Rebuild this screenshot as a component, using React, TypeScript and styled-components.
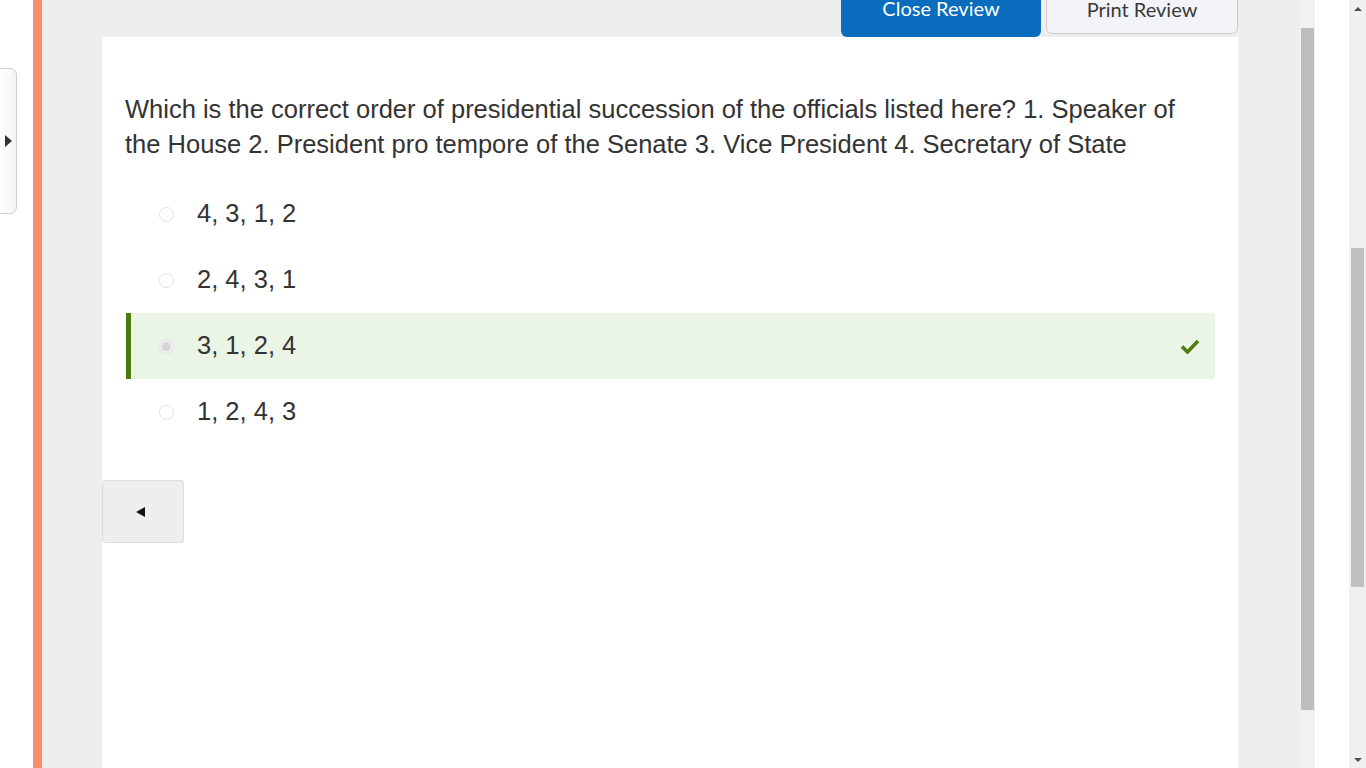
import styled, {createGlobalStyle} from "styled-components";

const GlobalStyle = createGlobalStyle`
    html, body {
        margin: 0;
        padding: 0;
        background: #ffffff;
        overflow: hidden;
    }
`

const options = [
    {label: '4, 3, 1, 2', correct: false},
    {label: '2, 4, 3, 1', correct: false},
    {label: '3, 1, 2, 4', correct: true},
    {label: '1, 2, 4, 3', correct: false},
]

const question = 'Which is the correct order of presidential succession of the officials listed here? 1. Speaker of the House 2. President pro tempore of the Senate 3. Vice President 4. Secretary of State'

const $Page = styled.div`
    display: flex;
    height: 100vh;
    width: 100vw;
    overflow: hidden;
`

const $LeftRail = styled.div`
    width: 33px;
    flex-shrink: 0;
    padding-top: 68px;
    box-sizing: border-box;
`

const $DrawerTab = styled.div`
    width: 18px;
    height: 146px;
    margin-left: -1px;
    box-sizing: border-box;
    border: 1px solid #cfcfcf;
    border-radius: 0 7px 7px 0;
    background: linear-gradient(to right, #ffffff, #f3f3f3);
    display: flex;
    align-items: center;
    padding-left: 5px;
`

const $TriRight = styled.div`
    width: 0;
    height: 0;
    border-top: 6px solid transparent;
    border-bottom: 6px solid transparent;
    border-left: 7px solid #333;
`

const $Accent = styled.div`
    width: 9px;
    flex-shrink: 0;
    background: #f68e6a;
    border-right: 2px solid #f8eee0;
`

const $Main = styled.div`
    flex: 1;
    background: #eeeeee;
    display: flex;
    flex-direction: column;
    padding: 0 62px 0 58px;
    min-width: 0;
`

const $Toolbar = styled.div`
    display: flex;
    justify-content: flex-end;
    align-items: flex-start;
    gap: 5px;
    margin-top: -8px;
`

const $ToolButton = styled.button<{ $primary?: boolean }>`
    box-sizing: border-box;
    width: ${p => p.$primary ? '200px' : '192px'};
    height: ${p => p.$primary ? '45px' : '42px'};
    padding: 4px 0 0;
    margin: 0;
    font-family: Lato, "Open Sans", sans-serif;
    font-size: 20px;
    line-height: 24px;
    display: flex;
    justify-content: center;
    align-items: flex-start;
    border-radius: 6px;
    cursor: pointer;
    background: ${p => p.$primary ? '#0a6cbd' : '#f2f4f7'};
    color: ${p => p.$primary ? '#ffffff' : '#3a3a3a'};
    border: ${p => p.$primary ? 'none' : '1px solid #c8ccd2'};
`

const $Card = styled.div`
    flex: 1;
    background: #ffffff;
    padding-top: 55px;
`

const $Question = styled.p`
    margin: 0;
    padding: 0 23px;
    font-family: "Liberation Sans", Arial, sans-serif;
    font-size: 25.5px;
    line-height: 35px;
    color: #333333;
`

const $Options = styled.div`
    margin: 19px 23px 0 24px;
    display: flex;
    flex-direction: column;
`

const $Option = styled.div<{ $correct?: boolean }>`
    height: 66px;
    display: flex;
    align-items: center;
    box-sizing: border-box;
    padding-left: ${p => p.$correct ? '28px' : '33px'};
    padding-right: 15px;
    background: ${p => p.$correct ? '#ebf5e6' : 'transparent'};
    border-left: ${p => p.$correct ? '5px solid #4a7a10' : 'none'};
`

const $Radio = styled.span<{ $checked?: boolean }>`
    width: 15px;
    height: 15px;
    box-sizing: border-box;
    border-radius: 50%;
    border: 1px solid #e2e2e2;
    background: ${p => p.$checked ? '#f0f0f0' : '#ffffff'};
    display: flex;
    align-items: center;
    justify-content: center;
    flex-shrink: 0;

    &::after {
        content: '';
        width: 9px;
        height: 9px;
        border-radius: 50%;
        background: ${p => p.$checked ? '#d6d6d6' : 'transparent'};
    }
`

const $OptionLabel = styled.span`
    margin-left: 23px;
    padding-bottom: 2px;
    flex: 1;
    font-family: "Liberation Sans", Arial, sans-serif;
    font-size: 25.5px;
    color: #333333;
`

const $PrevButton = styled.button`
    margin-top: 35px;
    width: 82px;
    height: 63px;
    box-sizing: border-box;
    background: #eeeeee;
    border: 1px solid #dedede;
    border-radius: 3px;
    display: flex;
    align-items: center;
    justify-content: center;
    padding: 0 6px 0 0;
    cursor: pointer;
`

const $TriLeft = styled.div`
    width: 0;
    height: 0;
    border-top: 5px solid transparent;
    border-bottom: 5px solid transparent;
    border-right: 9px solid #111;
`

const $InnerScroll = styled.div`
    width: 15px;
    flex-shrink: 0;
    background: #f1f1f1;
    padding: 28px 1px 0 1px;
    box-sizing: border-box;
`

const $InnerThumb = styled.div`
    height: 682px;
    background: #bdbdbd;
`

const $Gutter = styled.div`
    width: 34px;
    flex-shrink: 0;
    background: #ffffff;
`

const $PageScroll = styled.div`
    width: 17px;
    flex-shrink: 0;
    background: #f0f0f0;
    display: flex;
    flex-direction: column;
    align-items: center;
`

const $ArrowBox = styled.div`
    height: 17px;
    width: 17px;
    display: flex;
    align-items: center;
    justify-content: center;
`

const $Arrow = styled.div<{ $down?: boolean }>`
    width: 0;
    height: 0;
    border-left: 4px solid transparent;
    border-right: 4px solid transparent;
    ${p => p.$down ? 'border-top: 4px solid #505050;' : 'border-bottom: 4px solid #505050;'}
`

const $PageThumb = styled.div`
    margin-top: 231px;
    width: 13px;
    height: 339px;
    background: #c1c1c1;
`

const $Spacer = styled.div`
    flex: 1;
`

function CheckIcon() {
    return (
        <svg width="20" height="16" viewBox="0 0 20 16">
            <path d="M2 8.5 L7.5 14 L18 3" fill="none" stroke="#4d7c0f" strokeWidth="3.6"/>
        </svg>
    )
}

function App() {
    return (
        <>
            <GlobalStyle/>
            <$Page>
                <$LeftRail>
                    <$DrawerTab>
                        <$TriRight/>
                    </$DrawerTab>
                </$LeftRail>
                <$Accent/>
                <$Main>
                    <$Toolbar>
                        <$ToolButton $primary>Close Review</$ToolButton>
                        <$ToolButton>Print Review</$ToolButton>
                    </$Toolbar>
                    <$Card>
                        <$Question>{question}</$Question>
                        <$Options>
                            {options.map(o => (
                                <$Option key={o.label} $correct={o.correct}>
                                    <$Radio $checked={o.correct}/>
                                    <$OptionLabel>{o.label}</$OptionLabel>
                                    {o.correct && <CheckIcon/>}
                                </$Option>
                            ))}
                        </$Options>
                        <$PrevButton aria-label="Previous">
                            <$TriLeft/>
                        </$PrevButton>
                    </$Card>
                </$Main>
                <$InnerScroll>
                    <$InnerThumb/>
                </$InnerScroll>
                <$Gutter/>
                <$PageScroll>
                    <$ArrowBox><$Arrow/></$ArrowBox>
                    <$PageThumb/>
                    <$Spacer/>
                    <$ArrowBox><$Arrow $down/></$ArrowBox>
                </$PageScroll>
            </$Page>
        </>
    )
}

export default App
